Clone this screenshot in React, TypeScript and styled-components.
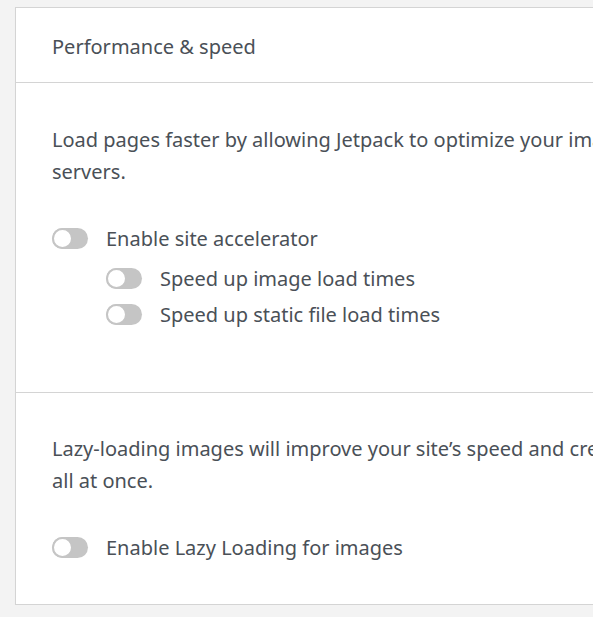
import React from "react";
import styled, { createGlobalStyle } from "styled-components";

const Global = createGlobalStyle`
  html, body { margin: 0; padding: 0; background: #f3f3f3; overflow: hidden; }
  body { font-family: "Noto Sans", "Open Sans", sans-serif; color: #4a5057; }
`;

const Page = styled.div`
  padding: 7px 0 0 15px;
  width: 800px;
`;

const Card = styled.div`
  background: #fff;
  border: 1px solid #d4d4d4;
  box-shadow: 0 1px 1px rgba(0,0,0,0.04);
`;

const Header = styled.div`
  height: 75px;
  display: flex;
  align-items: center;
  padding: 2px 36px 0;
  box-sizing: border-box;
  border-bottom: 1px solid #d4d4d4;
  font-size: 20px;
`;

const Section = styled.div<{ $height: number; $top: number }>`
  height: ${(p) => p.$height}px;
  box-sizing: border-box;
  padding: ${(p) => p.$top}px 36px 0;
  border-bottom: 1px solid #d4d4d4;
  &:last-child { border-bottom: none; }
`;

const Text = styled.p`
  margin: 0 0 32px;
  font-size: 20px;
  line-height: 32px;
  white-space: nowrap;
`;

const Row = styled.label<{ $indent?: boolean }>`
  display: flex;
  align-items: center;
  gap: 18px;
  height: 36px;
  margin-left: ${(p) => (p.$indent ? 54 : 0)}px;
  font-size: 20px;
  & + & { margin-top: 4px; }
  & + & + & { margin-top: 0; }
`;

const Track = styled.span`
  position: relative;
  width: 36px;
  height: 21px;
  border-radius: 11px;
  background: #c5c5c5;
  flex-shrink: 0;
  &::after {
    content: "";
    position: absolute;
    top: 0;
    left: 0;
    width: 17px;
    height: 17px;
    border-radius: 50%;
    background: #fff;
    border: 2px solid #c5c5c5;
  }
`;

const Toggle = ({ label, indent }: { label: string; indent?: boolean }) => (
  <Row $indent={indent}>
    <Track />
    <span>{label}</span>
  </Row>
);

export default function App() {
  return (
    <>
      <Global />
      <Page>
        <Card>
          <Header>Performance &amp; speed</Header>
          <Section $height={310} $top={41}>
            <Text>
              Load pages faster by allowing Jetpack to optimize your images and serve your images and static files from our global network of
              <br />
              servers.
            </Text>
            <Toggle label="Enable site accelerator" />
            <Toggle label="Speed up image load times" indent />
            <Toggle label="Speed up static file load times" indent />
          </Section>
          <Section $height={211} $top={40}>
            <Text>
              Lazy-loading images will improve your site’s speed and create a smoother viewing experience. Images will load as visitors scroll down the screen, instead of
              <br />
              all at once.
            </Text>
            <Toggle label="Enable Lazy Loading for images" />
          </Section>
        </Card>
      </Page>
    </>
  );
}
